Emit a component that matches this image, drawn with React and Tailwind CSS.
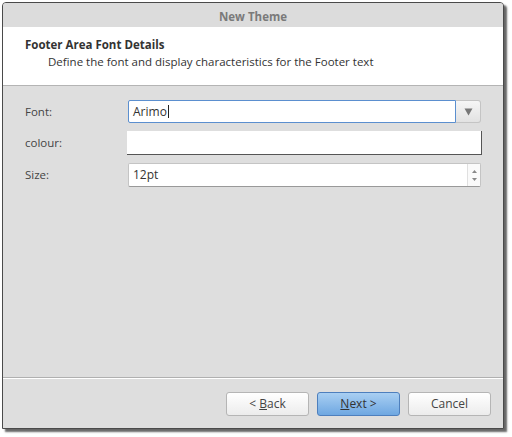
export default function App() {
  const font = { fontFamily: '"Open Sans", "DejaVu Sans", sans-serif' };
  return (
    <div className="w-[512px] h-[437px] bg-white relative" style={font}>
      <div className="absolute left-[2px] top-[2px] w-[502px] h-[427px] rounded-t-[4px] border border-[#4a4a4a] bg-[#dedede] flex flex-col shadow-[3px_3px_2px_rgba(0,0,0,0.6)]">
        {/* title bar */}
        <div className="h-[24px] shrink-0 flex items-center justify-center pt-[3px] rounded-t-[3px] bg-[#dcdcdc] text-[11.5px] font-bold text-[#7a7a7a]">
          New Theme
        </div>
        {/* header */}
        <div className="h-[59px] shrink-0 bg-white border-b border-[#b4b4b4] pl-[22px] pt-[9px]">
          <div className="text-[11.5px] font-bold text-[#333] leading-[17px]">Footer Area Font Details</div>
          <div className="text-[11.5px] text-[#333] leading-[17px] pl-[23px]">
            Define the font and display characteristics for the Footer text
          </div>
        </div>
        {/* content */}
        <div className="flex-1 pt-[14px] pl-[22px] pr-[22px] flex flex-col gap-[8px] border-b border-[#b0b0b0]">
          <div className="flex items-center h-[23px]">
            <div className="w-[103px] text-[11.5px] text-[#444]">Font:</div>
            <div className="flex flex-1 h-[23px]">
              <div className="flex-1 bg-white border border-[#5b8fcf] rounded-l-[2px] flex items-center pl-[4px] text-[12px] text-[#333]">
                Arimo<span className="inline-block w-px h-[13px] bg-[#222] ml-px"></span>
              </div>
              <div className="w-[25px] bg-gradient-to-b from-[#f6f6f6] to-[#e2e2e2] border border-[#c4c4c4] border-l-0 rounded-r-[3px] flex items-center justify-center">
                <svg width="9" height="8" viewBox="0 0 9 8">
                  <path d="M0.5 0.5 H8.5 L4.5 7.5 Z" fill="#777" />
                </svg>
              </div>
            </div>
          </div>
          <div className="flex items-center h-[24px]">
            <div className="w-[102px] text-[11.5px] text-[#444]">colour:</div>
            <div className="flex-1 h-[24px] bg-white border-r border-b border-[#555] mr-[-1px]"></div>
          </div>
          <div className="flex items-center h-[24px]">
            <div className="w-[103px] text-[11.5px] text-[#444]">Size:</div>
            <div className="flex flex-1 h-[24px] bg-white border border-[#c4c4c4] border-b-[#999] rounded-[2px]">
              <div className="flex-1 flex items-center pl-[4px] text-[12px] text-[#333]">12pt</div>
              <div className="w-[13px] flex flex-col items-center justify-center gap-[5px] bg-[#fafafa] border-l border-[#e0e0e0]">
                <svg width="5" height="3" viewBox="0 0 5 3"><path d="M0 3 L2.5 0 L5 3 Z" fill="#888" /></svg>
                <svg width="5" height="3" viewBox="0 0 5 3"><path d="M0 0 L2.5 3 L5 0 Z" fill="#888" /></svg>
              </div>
            </div>
          </div>
        </div>
        {/* footer */}
        <div className="h-[50px] shrink-0 border-t border-white flex justify-end items-start pt-[13px] pr-[12px] gap-[8px]">
          <button className="w-[83px] h-[24px] rounded-[3px] border border-[#b5b5b5] bg-gradient-to-b from-white to-[#ececec] text-[12px] text-[#444]">
            &lt; <span className="underline">B</span>ack
          </button>
          <button className="w-[83px] h-[24px] rounded-[3px] border border-[#4d7fbd] bg-gradient-to-b from-[#a9cff2] to-[#6ea7e1] text-[12px] text-[#333]">
            <span className="underline">N</span>ext &gt;
          </button>
          <button className="w-[83px] h-[24px] rounded-[3px] border border-[#b5b5b5] bg-gradient-to-b from-white to-[#ececec] text-[12px] text-[#444]">
            Cancel
          </button>
        </div>
      </div>
    </div>
  );
}
